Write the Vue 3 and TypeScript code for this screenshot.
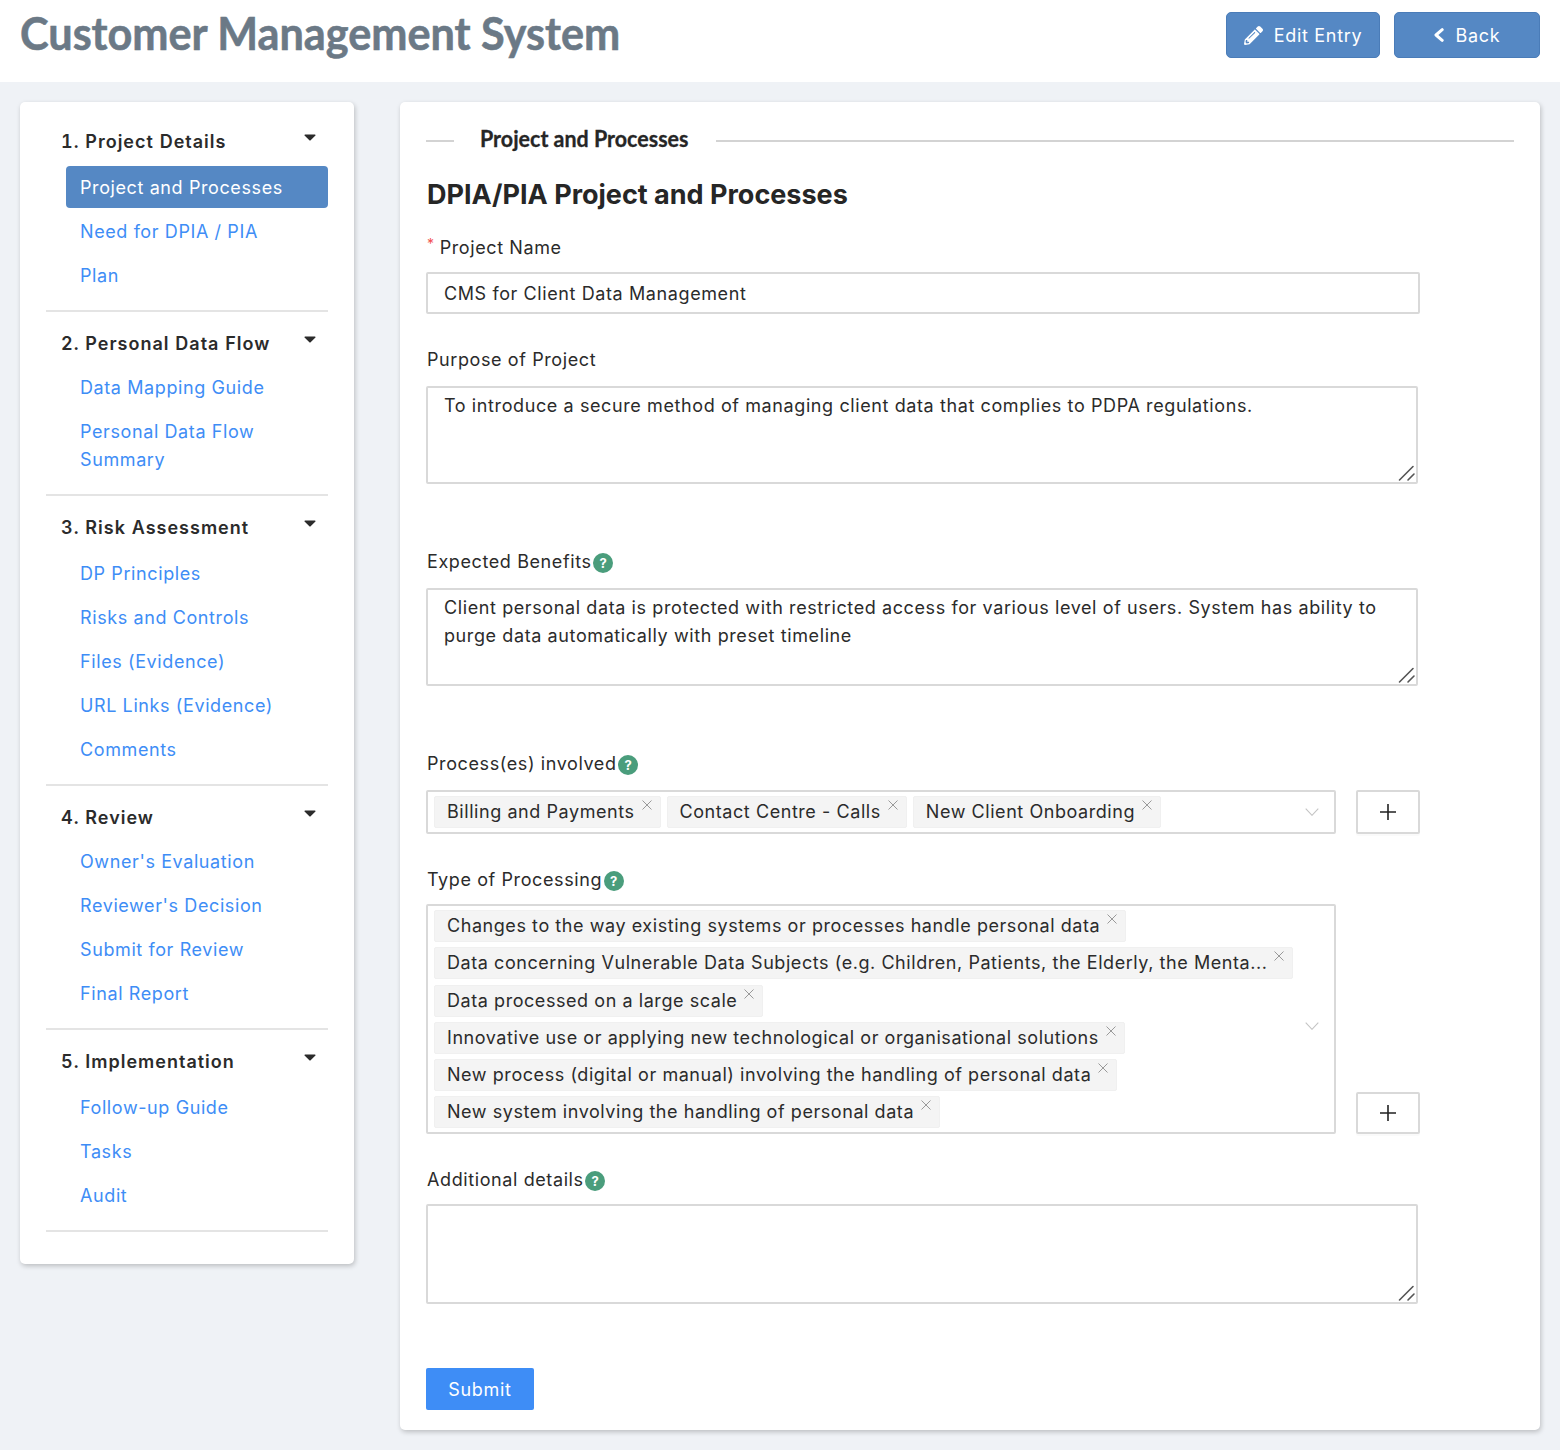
<script setup lang="ts">
interface NavItem { label: string; active?: boolean }
interface NavSection { title: string; tight: boolean; items: NavItem[] }

const sections: NavSection[] = [
  { title: '1. Project Details', tight: false, items: [
    { label: 'Project and Processes', active: true },
    { label: 'Need for DPIA / PIA' },
    { label: 'Plan' },
  ] },
  { title: '2. Personal Data Flow', tight: true, items: [
    { label: 'Data Mapping Guide' },
    { label: 'Personal Data Flow Summary' },
  ] },
  { title: '3. Risk Assessment', tight: false, items: [
    { label: 'DP Principles' },
    { label: 'Risks and Controls' },
    { label: 'Files (Evidence)' },
    { label: 'URL Links (Evidence)' },
    { label: 'Comments' },
  ] },
  { title: '4. Review', tight: true, items: [
    { label: "Owner's Evaluation" },
    { label: "Reviewer's Decision" },
    { label: 'Submit for Review' },
    { label: 'Final Report' },
  ] },
  { title: '5. Implementation', tight: false, items: [
    { label: 'Follow-up Guide' },
    { label: 'Tasks' },
    { label: 'Audit' },
  ] },
]

const processes = ['Billing and Payments', 'Contact Centre - Calls', 'New Client Onboarding']
const types = [
  'Changes to the way existing systems or processes handle personal data',
  'Data concerning Vulnerable Data Subjects (e.g. Children, Patients, the Elderly, the Menta...',
  'Data processed on a large scale',
  'Innovative use or applying new technological or organisational solutions',
  'New process (digital or manual) involving the handling of personal data',
  'New system involving the handling of personal data',
]
</script>

<template>
  <div class="page">
    <header class="topbar">
      <h1 class="title">Customer Management System</h1>
      <div class="actions">
        <button class="btn btn-edit">
          <svg class="pencil" viewBox="0 0 512 512"><path fill="currentColor" d="M497.9 142.1l-46.1 46.1c-4.7 4.7-12.3 4.7-17 0l-111-111c-4.7-4.7-4.7-12.3 0-17l46.1-46.1c18.7-18.7 49.1-18.7 67.9 0l60.1 60.1c18.8 18.7 18.8 49.1 0 67.9zM284.2 99.8L21.6 362.4.4 483.9c-2.9 16.4 11.4 30.6 27.8 27.8l121.5-21.3 262.6-262.6c4.7-4.7 4.7-12.3 0-17l-111-111c-4.8-4.7-12.4-4.7-17.1 0zM124.1 339.9c-5.5-5.5-5.5-14.3 0-19.8l154-154c5.5-5.5 14.3-5.5 19.8 0s5.5 14.3 0 19.8l-154 154c-5.5 5.5-14.3 5.5-19.8 0zM88 424h48v36.3l-64.5 11.3-31.1-31.1L51.7 376H88v48z"/></svg>
          Edit Entry
        </button>
        <button class="btn btn-back">
          <svg class="chev-left" viewBox="0 0 10 14"><path d="M8.2 1.7 2 7l6.2 5.3" fill="none" stroke="currentColor" stroke-width="3" stroke-linecap="round" stroke-linejoin="round"/></svg>
          Back
        </button>
      </div>
    </header>

    <div class="body">
      <aside class="sidebar">
        <section v-for="s in sections" :key="s.title" class="nav-section">
          <div class="nav-head" :class="{ tight: s.tight }">
            <span>{{ s.title }}</span>
            <svg class="caret" viewBox="0 0 12 7"><path d="M1 0.6h10a.6.6 0 0 1 .45 1L6.4 6.4a.6.6 0 0 1-.8 0L.55 1.6A.6.6 0 0 1 1 .6z" fill="#2b2b2b"/></svg>
          </div>
          <a
            v-for="i in s.items"
            :key="i.label"
            class="nav-item"
            :class="{ active: i.active }"
          >{{ i.label }}</a>
        </section>
      </aside>

      <main class="content">
        <div class="legend">
          <span class="legend-line short"></span>
          <span class="legend-title">Project and Processes</span>
          <span class="legend-line"></span>
        </div>
        <h2 class="form-title">DPIA/PIA Project and Processes</h2>

        <div class="label first near"><span class="req">*</span>Project Name</div>
        <div class="input">CMS for Client Data Management</div>

        <div class="label">Purpose of Project</div>
        <div class="textarea">
          To introduce a secure method of managing client data that complies to PDPA regulations.
          <svg class="grip" viewBox="0 0 18 18"><path d="M15 2.5 1.5 16M16 10l-6 6" stroke="#555" stroke-width="1.6" stroke-linecap="round" fill="none"/></svg>
        </div>

        <div class="label far">Expected Benefits<span class="help">?</span></div>
        <div class="textarea">
          Client personal data is protected with restricted access for various level of users. System has ability to purge data automatically with preset timeline
          <svg class="grip" viewBox="0 0 18 18"><path d="M15 2.5 1.5 16M16 10l-6 6" stroke="#555" stroke-width="1.6" stroke-linecap="round" fill="none"/></svg>
        </div>

        <div class="label far">Process(es) involved<span class="help">?</span></div>
        <div class="select-row">
          <div class="select">
            <span v-for="p in processes" :key="p" class="tag">{{ p }}
              <svg class="tag-x" viewBox="0 0 12 12"><path d="M1.5 1.5l9 9M10.5 1.5l-9 9" stroke="#999" stroke-width="1" fill="none"/></svg>
            </span>
            <svg class="arrow" viewBox="0 0 14 8"><path d="M.7.7 7 7.3 13.3.7" stroke="#c4c4c4" stroke-width="1.1" fill="none"/></svg>
          </div>
          <button class="plus plus-tall"><svg viewBox="0 0 16 16"><path d="M8 0v16M0 8h16" stroke="#222" stroke-width="1.6"/></svg></button>
        </div>

        <div class="label near">Type of Processing<span class="help">?</span></div>
        <div class="select-row">
          <div class="select multi">
            <span v-for="t in types" :key="t" class="tag">{{ t }}
              <svg class="tag-x" viewBox="0 0 12 12"><path d="M1.5 1.5l9 9M10.5 1.5l-9 9" stroke="#999" stroke-width="1" fill="none"/></svg>
            </span>
            <svg class="arrow" viewBox="0 0 14 8"><path d="M.7.7 7 7.3 13.3.7" stroke="#c4c4c4" stroke-width="1.1" fill="none"/></svg>
          </div>
          <button class="plus"><svg viewBox="0 0 16 16"><path d="M8 0v16M0 8h16" stroke="#222" stroke-width="1.6"/></svg></button>
        </div>

        <div class="label near">Additional details<span class="help">?</span></div>
        <div class="textarea tall">
          <svg class="grip" viewBox="0 0 18 18"><path d="M15 2.5 1.5 16M16 10l-6 6" stroke="#555" stroke-width="1.6" stroke-linecap="round" fill="none"/></svg>
        </div>

        <button class="submit">Submit</button>
      </main>
    </div>
  </div>
</template>

<style>
html, body { margin: 0; background: #eff2f6; }
</style>

<style scoped>
.page {
  width: 1560px;
  height: 1450px;
  overflow: hidden;
  background: #eff2f6;
  font-family: Inter, "Liberation Sans", sans-serif;
  font-size: 18px;
  letter-spacing: 0.6px;
  color: #2b2b2b;
}
.topbar {
  height: 82px;
  background: #fff;
  display: flex;
  align-items: flex-start;
  justify-content: space-between;
  padding: 0 20px;
}
.title {
  margin: 5px 0 0;
  font-family: Lato, Roboto, sans-serif;
  font-size: 46px;
  line-height: 56px;
  font-weight: 700;
  letter-spacing: 0;
  color: #6b7986;
  -webkit-text-stroke: 0.6px #6b7986;
  transform: scaleX(0.939);
  transform-origin: left center;
}
.actions { display: flex; gap: 14px; margin-top: 12px; }
.btn {
  height: 46px;
  display: flex;
  align-items: center;
  justify-content: center;
  gap: 11px;
  background: #5588c4;
  border: 1px solid #4a7cb8;
  border-radius: 5px;
  color: #fff;
  font: inherit;
  letter-spacing: 0.7px;
  padding: 0;
}
.btn-edit { width: 154px; }
.btn-back { width: 146px; gap: 12px; }
.pencil { width: 19px; height: 19px; }
.chev-left { width: 10px; height: 14px; }

.body { display: flex; gap: 46px; padding: 20px 20px 0; align-items: flex-start; }
.sidebar {
  width: 334px;
  height: 1162px;
  box-sizing: border-box;
  flex: none;
  background: #fff;
  border-radius: 5px;
  box-shadow: 1px 2px 5px rgba(0, 0, 0, 0.22);
  padding: 24px 26px 0;
}
.nav-section { border-bottom: 2px solid #e4e4e4; padding-bottom: 14px; margin-bottom: 16px; }
.nav-head {
  display: flex;
  justify-content: space-between;
  padding-left: 15px;
  padding-right: 12px;
  height: 30px;
  line-height: 32px;
  margin-bottom: 10px;
  font-weight: 600;
  letter-spacing: 1px;
  font-variant-numeric: tabular-nums;
}
.nav-head.tight { margin-bottom: 8px; }
.caret { width: 12px; height: 7px; margin-top: 8px; }
.nav-item {
  display: block;
  margin-left: 20px;
  padding: 8px 14px 6px;
  line-height: 28px;
  margin-top: 2px;
  color: #3e8df6;
  border-radius: 4px;
}
.nav-item:first-of-type { margin-top: 0; }
.nav-item.active { background: #5588c4; color: #fff; }

.content {
  width: 1140px;
  height: 1328px;
  box-sizing: border-box;
  flex: none;
  background: #fff;
  border-radius: 5px;
  box-shadow: 1px 2px 5px rgba(0, 0, 0, 0.22);
  padding: 25px 26px 0;
}
.legend { display: flex; align-items: center; height: 28px; }
.legend-title {
  font-family: Lato, Roboto, sans-serif;
  font-size: 23px;
  font-weight: 700;
  letter-spacing: 0;
  margin: 0 13px 0 26px;
  color: #262626;
  -webkit-text-stroke: 0.3px #262626;
  position: relative;
  top: -3px;
  transform: scaleX(0.933);
  transform-origin: left center;
}
.legend-line { flex: 1; height: 2px; background: #d3d3d3; }
.legend-line.short { flex: none; width: 28px; }
.form-title {
  margin: 22px 0 0 1px;
  font-size: 27px;
  line-height: 36px;
  font-weight: 700;
  letter-spacing: 0;
  color: #262626;
}
.label {
  margin: 31px 0 13px 1px;
  height: 28px;
  box-sizing: border-box;
  padding-top: 2px;
  line-height: 26px;
  display: flex;
  align-items: center;
}
.label.first { margin-top: 20px; }
.label.near { margin-bottom: 11px; }
.label.far { margin-top: 63px; }
.req { color: #f25050; font-size: 14px; margin-right: 5px; position: relative; top: -4px; }
.help {
  width: 20px;
  height: 20px;
  border-radius: 50%;
  background: #4a9d7c;
  color: #fff;
  font-size: 13px;
  font-weight: 700;
  letter-spacing: 0;
  line-height: 20px;
  text-align: center;
  margin: 2px 0 0 1.5px;
}
.input {
  width: 994px;
  height: 42px;
  box-sizing: border-box;
  border: 2px solid #d9d9d9;
  border-radius: 2px;
  padding: 0 16px;
  line-height: 40px;
}
.textarea {
  position: relative;
  width: 992px;
  height: 98px;
  box-sizing: border-box;
  border: 2px solid #d9d9d9;
  border-radius: 2px;
  padding: 4px 16px;
  line-height: 28px;
}
.textarea.tall { height: 100px; }
.grip { position: absolute; right: 0; bottom: 0; width: 18px; height: 18px; }
.select-row { display: flex; align-items: flex-end; justify-content: space-between; width: 994px; }
.select {
  position: relative;
  width: 910px;
  box-sizing: border-box;
  min-height: 44px;
  border: 2px solid #d9d9d9;
  border-radius: 2px;
  padding: 4px 40px 4px 6px;
  display: flex;
  flex-wrap: wrap;
  gap: 5.3px 6px;
  align-content: flex-start;
}
.select.multi { padding-right: 6px; height: 230px; }
.tag {
  position: relative;
  display: block;
  height: 32px;
  line-height: 30px;
  box-sizing: border-box;
  background: #f4f4f4;
  border: 1px solid #f0f0f0;
  border-radius: 2px;
  padding: 0 25px 0 12px;
  white-space: nowrap;
  letter-spacing: 0.56px;
}
.tag-x { position: absolute; right: 7px; top: 2px; width: 12px; height: 12px; }
.arrow { position: absolute; right: 15px; top: 50%; margin-top: -4px; width: 14px; height: 8px; }
.multi .arrow { margin-top: 3px; }
.plus {
  width: 64px;
  height: 42px;
  background: #fff;
  border: 2px solid #d9d9d9;
  border-radius: 2px;
  box-shadow: 0 2px 0 rgba(0, 0, 0, 0.02);
  padding: 0;
  display: flex;
  align-items: center;
  justify-content: center;
}
.plus-tall { height: 44px; }
.plus svg { width: 16px; height: 16px; }
.submit {
  display: block;
  margin-top: 64px;
  width: 108px;
  height: 42px;
  background: #3e8df6;
  color: #fff;
  border: 0;
  border-radius: 2px;
  font: inherit;
  letter-spacing: 0.7px;
}
</style>
